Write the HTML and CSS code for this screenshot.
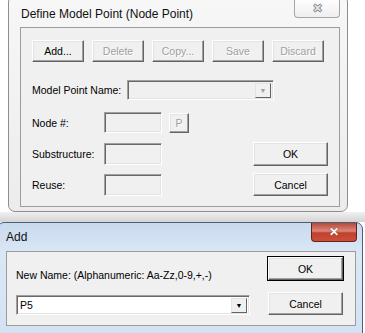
FILE: index.html
```html
<!doctype html>
<html>
<head>
  <link rel="stylesheet" href="styles.css">
</head>
<body>
  <div class="win inactive">
    <div class="titlebar">
      <span class="title">Define Model Point (Node Point)</span>
      <span class="close">&#x2715;</span>
    </div>
    <div class="client main">
      <div class="row toolbar">
        <button class="btn">Add...</button>
        <button class="btn off">Delete</button>
        <button class="btn off">Copy...</button>
        <button class="btn off">Save</button>
        <button class="btn off">Discard</button>
      </div>
      <div class="row name-row">
        <label class="lbl wide">Model Point Name:</label>
        <div class="combo off"><span class="combo-text"></span><span class="drop">&#9660;</span></div>
      </div>
      <div class="row node-row">
        <label class="lbl">Node #:</label>
        <div class="field"></div>
        <button class="btn off pbtn">P</button>
      </div>
      <div class="row sub-row">
        <label class="lbl">Substructure:</label>
        <div class="field"></div>
        <button class="btn big">OK</button>
      </div>
      <div class="row reuse-row">
        <label class="lbl">Reuse:</label>
        <div class="field"></div>
        <button class="btn big">Cancel</button>
      </div>
    </div>
  </div>

  <div class="gap"></div>

  <div class="win active">
    <div class="titlebar">
      <span class="title">Add</span>
      <span class="close red">&#x2715;</span>
    </div>
    <div class="client add">
      <div class="add-left">
        <p class="hint">New Name: (Alphanumeric: Aa-Zz,0-9,+,-)</p>
        <div class="combo white"><span class="combo-text">P5</span><span class="drop">&#9660;</span></div>
      </div>
      <div class="add-right">
        <button class="btn big default">OK</button>
        <button class="btn big">Cancel</button>
      </div>
    </div>
  </div>
</body>
</html>
```

FILE: styles.css
```css
* {
  margin: 0;
  padding: 0;
  box-sizing: border-box;
}

body {
  width: 365px;
  height: 333px;
  overflow: hidden;
  background: #fff;
  font-family: "Liberation Sans", Arial, sans-serif;
  font-size: 10.5px;
  color: #000;
}

/* window frames */
.win {
  position: relative;
  border: 1px solid #8e8e8e;
  border-radius: 7px;
}

.win.inactive {
  width: 340px;
  height: 217px;
  margin: -5px 0 0 8px;
  background: linear-gradient(#f7f7f7, #ececec);
  padding: 0 7px 0 11px;
}

.gap {
  height: 10px;
  background: linear-gradient(#f0f0f0, #d4d4d4);
}

.win.active {
  width: 366px;
  height: 120px;
  margin-left: -3px;
  border-color: #4d5f78;
  background: linear-gradient(#c9daee, #dae7f5 30px, #d3e2f3);
  padding: 0 6px 0 8px;
}

.titlebar {
  display: flex;
  align-items: center;
  height: 31px;
  padding-top: 4px;
}

.active .titlebar {
  height: 28px;
  padding-top: 0;
}

.title {
  font-size: 12px;
  padding-left: 1px;
  color: #111;
}

.active .title {
  padding-left: 0;
}

.close {
  position: absolute;
  top: 4px;
  right: 7px;
  width: 46px;
  height: 18px;
  border: 1px solid #a5a5a5;
  border-top: none;
  border-radius: 0 0 4px 4px;
  background: linear-gradient(#fdfdfd, #efefef);
  color: #e8e8e8;
  text-shadow: -1px 0 #777, 1px 0 #777, 0 -1px #777, 0 1px #777;
  font-size: 11px;
  text-align: center;
  line-height: 16px;
  font-weight: bold;
}

.close.red {
  top: 0;
  right: 5px;
  width: 46px;
  height: 19px;
  border-color: #6a2118;
  background: linear-gradient(#b8483a, #d9887a 45%, #c33f2c 55%, #c9503c);
  color: #fff;
  text-shadow: 0 0 1px #5a1a10;
  font-size: 12px;
  line-height: 18px;
}

.client {
  background: #f0f0f0;
  border: 1px solid #9c9c9c;
}

/* main dialog */
.main {
  height: 180px;
  padding: 12px 11px 0 11px;
}

.row {
  display: flex;
  align-items: center;
}

.toolbar {
  gap: 8px;
  height: 22px;
}

.toolbar .btn {
  width: 52px;
  height: 22px;
}

.lbl {
  width: 72px;
}

.lbl.wide {
  width: 95px;
}

.name-row {
  margin-top: 18px;
  height: 20px;
}

.node-row {
  margin-top: 12px;
  height: 21px;
}

.sub-row {
  margin-top: 9px;
  height: 24px;
}

.reuse-row {
  margin-top: 7px;
  height: 23px;
}

.field {
  width: 58px;
  height: 22px;
  border: 1px solid;
  border-color: #a0a0a0 #fff #fff #a0a0a0;
  box-shadow: inset 1px 1px #696969, inset -1px -1px #e3e3e3;
}

.node-row .field {
  height: 21px;
}

/* buttons */
.btn {
  font-family: inherit;
  font-size: 10.5px;
  color: #000;
  background: #f0f0f0;
  border: 1px solid;
  border-color: #fff #646464 #646464 #fff;
  box-shadow: inset -1px -1px #a0a0a0, inset 1px 1px #e3e3e3;
}

.btn.off {
  color: #a0a0a0;
  text-shadow: 1px 1px #fff;
}

.pbtn {
  width: 20px;
  height: 20px;
  margin-left: 7px;
}

.btn.big {
  width: 75px;
  height: 23px;
  margin-left: auto;
}

.sub-row .btn.big {
  height: 24px;
}

.btn.default {
  outline: 1px solid #000;
}

/* combos */
.combo {
  display: flex;
  align-items: center;
  width: 147px;
  height: 20px;
  border: 1px solid;
  border-color: #a0a0a0 #fff #fff #a0a0a0;
  box-shadow: inset 1px 1px #696969, inset -1px -1px #e3e3e3;
  padding: 2px 2px 2px 3px;
}

.combo-text {
  flex: 1;
}

.drop {
  width: 16px;
  height: 15px;
  background: #f0f0f0;
  border: 1px solid;
  border-color: #e3e3e3 #646464 #646464 #e3e3e3;
  font-size: 7px;
  line-height: 13px;
  text-align: center;
  color: #000;
}

.combo.off .drop {
  color: #a0a0a0;
}

.combo.white {
  background: #fff;
  width: 234px;
  height: 20px;
}

/* add dialog */
.add {
  height: 75px;
  display: flex;
  padding: 4px 12px 0 9px;
}

.add-left {
  flex: 1;
}

.hint {
  margin-top: 12px;
  height: 14px;
  line-height: 14px;
}

.add-left .combo {
  margin-top: 13px;
}

.add-right {
  display: flex;
  flex-direction: column;
  gap: 12px;
  padding-top: 1px;
}
```
